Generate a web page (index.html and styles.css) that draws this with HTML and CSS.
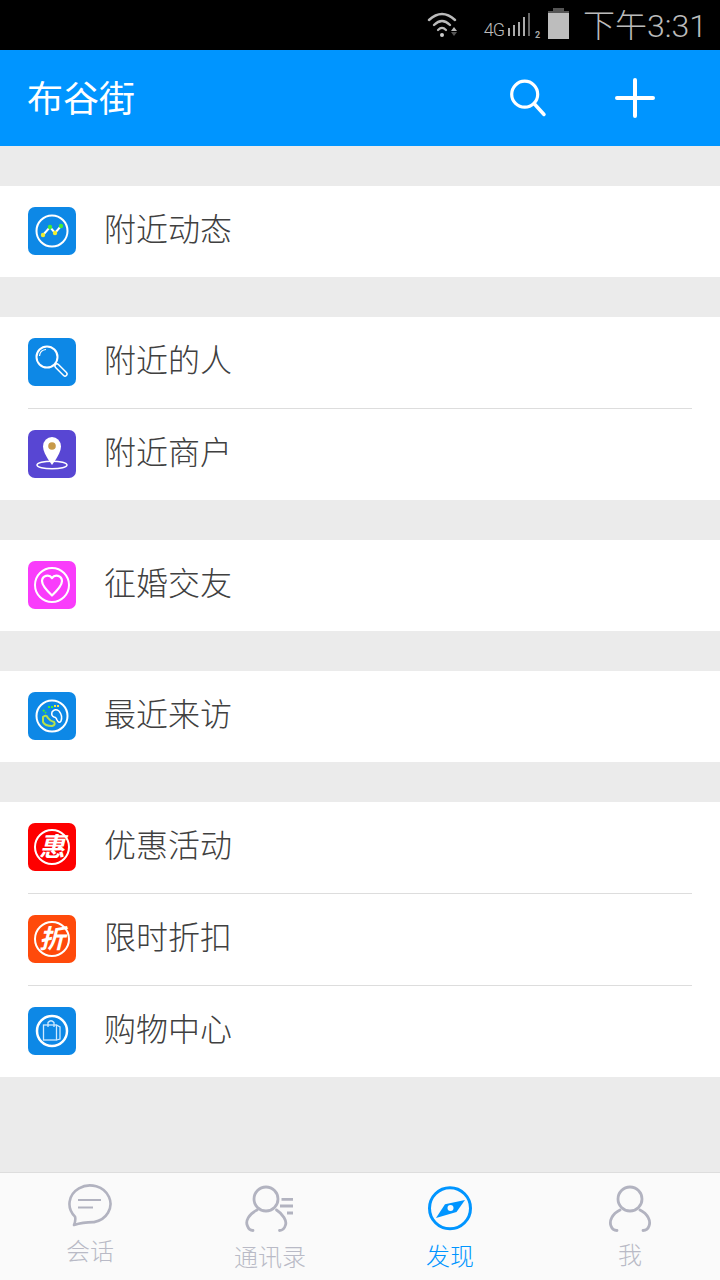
FILE: index.html
```html
<!DOCTYPE html>
<html lang="zh">
  <head>
    <meta charset="UTF-8" />
    <meta name="viewport" content="width=device-width, initial-scale=1" />
    <title>布谷街</title>
    <link rel="stylesheet" href="styles.css">
  </head>

  <body>
    <div class="status-bar">
      <svg class="ico-wifi" width="36" height="30" viewBox="0 0 36 30">
        <path d="M2 10 Q15 -2 28 10" fill="none" stroke="#bbb" stroke-width="2.400" stroke-linecap="round" />
        <path d="M7 15 Q15 7 23 15" fill="none" stroke="#bbb" stroke-width="2.400" stroke-linecap="round" />
        <path d="M11 20 Q15 16 19 20" fill="none" stroke="#bbb" stroke-width="2.200" stroke-linecap="round" />
        <circle cx="15" cy="25" r="2" fill="#ccc" />
        <path d="M24 21 l3 -4 l3 4z" fill="#bbb" />
        <path d="M24 22 l3 4 l3 -4z" fill="#555" />
      </svg>
      <span class="net">4G</span>
      <svg class="ico-signal" width="36" height="32" viewBox="0 0 36 32">
        <rect x="1" y="19" width="2" height="8" fill="#aaa" />
        <rect x="6" y="16" width="2" height="11" fill="#aaa" />
        <rect x="11" y="13" width="2" height="14" fill="#aaa" />
        <rect x="16" y="8" width="2" height="19" fill="#aaa" />
        <rect x="21" y="4" width="2" height="23" fill="#666" />
        <text class="sim" x="28" y="29">2</text>
      </svg>
      <svg class="ico-batt" width="22" height="32" viewBox="0 0 22 32">
        <rect x="5" y="0" width="11" height="3" fill="#555" />
        <rect x="0" y="3" width="21" height="2" fill="#555" />
        <rect x="0" y="5" width="21" height="26" fill="#bdbdbd" />
      </svg>
      <span class="clock">下午3:31</span>
    </div>

    <header class="top-bar">
      <h1 class="title">布谷街</h1>
      <div class="actions">
        <svg width="40" height="40" viewBox="0 0 40 40">
          <circle cx="16.700" cy="16.200" r="13" fill="none" stroke="#fff" stroke-width="3.200" />
          <path d="M26.500 26 L36 36.500" stroke="#fff" stroke-width="3.500" stroke-linecap="round" />
        </svg>
        <svg width="42" height="42" viewBox="0 0 42 42">
          <path d="M21 3 V39 M3 21 H39" stroke="#fff" stroke-width="4" stroke-linecap="round" />
        </svg>
      </div>
    </header>

    <main class="content">
      <section class="group">
        <div class="row">
          <span class="app-ico blue">
            <svg viewBox="0 0 48 48" width="48" height="48">
              <circle cx="24" cy="24" r="15.500" fill="none" stroke="#fff" stroke-width="2" />
              <path d="M15 28 L22 20 L27 26 L33 19" fill="none" stroke="#fff" stroke-width="2" />
              <circle cx="15" cy="28" r="2.200" fill="#ee3" />
              <circle cx="22" cy="20" r="2.200" fill="#4e3" />
              <circle cx="27" cy="26" r="2.200" fill="#ee3" />
              <circle cx="33" cy="19" r="2.200" fill="#4e3" />
            </svg>
          </span>
          <span class="label">附近动态</span>
        </div>
      </section>

      <section class="group">
        <div class="row">
          <span class="app-ico blue">
            <svg viewBox="0 0 48 48" width="48" height="48">
              <circle cx="19" cy="19" r="10.500" fill="none" stroke="#fff" stroke-width="2" />
              <path d="M11.500 18 Q12 12 18 11.500" fill="none" stroke="#fff" stroke-width="1.200" />
              <path d="M29 28 L37 36" stroke="#fff" stroke-width="5.500" stroke-linecap="round" />
              <path d="M29 28 L37 36" stroke="#0d88e6" stroke-width="2.600" stroke-linecap="round" />
            </svg>
          </span>
          <span class="label">附近的人</span>
        </div>
        <div class="row">
          <span class="app-ico purple">
            <svg viewBox="0 0 48 48" width="48" height="48">
              <ellipse cx="24" cy="35" rx="15" ry="3.800" fill="none" stroke="#fff" stroke-width="1.500" />
              <path d="M24 35 Q15 23 15 16.500 A9 9.500 0 0 1 33 16.500 Q33 23 24 35z" fill="#fff" />
              <circle cx="24" cy="16" r="3.800" fill="#c79a4a" />
            </svg>
          </span>
          <span class="label">附近商户</span>
        </div>
      </section>

      <section class="group">
        <div class="row">
          <span class="app-ico pink">
            <svg viewBox="0 0 48 48" width="48" height="48">
              <circle cx="24" cy="24" r="17" fill="none" stroke="#fff" stroke-width="2" />
              <path d="M24 34.500 Q14 25 14 20 A5.500 5.500 0 0 1 24 17 A5.500 5.500 0 0 1 34 20 Q34 25 24 34.500z" fill="none" stroke="#fff" stroke-width="2.200" stroke-linejoin="round" />
            </svg>
          </span>
          <span class="label">征婚交友</span>
        </div>
      </section>

      <section class="group">
        <div class="row">
          <span class="app-ico blue">
            <svg viewBox="0 0 48 48" width="48" height="48">
              <circle cx="24" cy="24" r="15.500" fill="none" stroke="#fff" stroke-width="2" />
              <path d="M24 20 Q27 16 31 19 Q35 24 33 29 Q31 32 29 28 Q28 25 26 25 Q23 24 24 20z" fill="none" stroke="#fff" stroke-width="1.500" />
              <path d="M15 25 Q18 22 20 26 Q22 29 26 30 Q28 33 24 34 Q17 34 15 30z" fill="none" stroke="#b8e04a" stroke-width="2" />
              <path d="M20 15 H25" stroke="#4e3" stroke-width="2" stroke-dasharray="2 1" />
              <path d="M26 14 H32" stroke="#fde047" stroke-width="2" stroke-dasharray="2 1" />
              <path d="M15 18 L18 21" stroke="#4e3" stroke-width="2" stroke-dasharray="2 1" />
            </svg>
          </span>
          <span class="label">最近来访</span>
        </div>
      </section>

      <section class="group">
        <div class="row">
          <span class="app-ico red">
            <svg viewBox="0 0 48 48" width="48" height="48">
              <circle cx="24" cy="24" r="17" fill="none" stroke="#fff" stroke-width="2" />
            </svg>
            <span class="ico-char">惠</span>
          </span>
          <span class="label">优惠活动</span>
        </div>
        <div class="row">
          <span class="app-ico orange">
            <svg viewBox="0 0 48 48" width="48" height="48">
              <circle cx="24" cy="24" r="17" fill="none" stroke="#fff" stroke-width="2" />
            </svg>
            <span class="ico-char">折</span>
          </span>
          <span class="label">限时折扣</span>
        </div>
        <div class="row">
          <span class="app-ico blue">
            <svg viewBox="0 0 48 48" width="48" height="48">
              <circle cx="24" cy="24" r="15" fill="none" stroke="#fff" stroke-width="2.500" />
              <rect x="15.500" y="18" width="13" height="15" fill="none" stroke="#cfeaff" stroke-width="1.300" />
              <path d="M28.500 18 L32 20 V32 L28.500 33" fill="none" stroke="#cfeaff" stroke-width="1.300" />
              <path d="M20 20 V15.500 Q23 12 26 15.500 V20" fill="none" stroke="#cfeaff" stroke-width="1.300" />
            </svg>
          </span>
          <span class="label">购物中心</span>
        </div>
      </section>
    </main>

    <nav class="tabs">
      <div class="tab tab-chat">
        <svg width="44" height="44" viewBox="0 0 44 44">
          <path d="M6 41 Q8 36 7 32.600 A20.500 18.500 0 1 1 26 38.100 Q15 38 6 41z" fill="none" stroke="#b2b3c0" stroke-width="2.600" stroke-linejoin="round" />
          <path d="M10 16 H33 M10 23.500 H25" stroke="#b2b3c0" stroke-width="2.200" />
        </svg>
        <span>会话</span>
      </div>
      <div class="tab">
        <svg width="50" height="48" viewBox="0 0 50 48">
          <circle cx="21" cy="14" r="12" fill="none" stroke="#b2b3c0" stroke-width="2.800" />
          <path d="M12 25 C4 29 0 36 2.500 41 Q4 45.500 8 45.500 M31.500 25 C38 29 42 36 40.500 40 Q39 45.500 34.500 45.500" fill="none" stroke="#b2b3c0" stroke-width="2.800" stroke-linecap="round" />
          <path d="M36.500 14.300 H48 M35 21 H48 M42 28 H48" stroke="#b2b3c0" stroke-width="2.800" />
        </svg>
        <span>通讯录</span>
      </div>
      <div class="tab active">
        <svg width="46" height="46" viewBox="0 0 46 46">
          <circle cx="23" cy="23.300" r="20.500" fill="none" stroke="#0095ff" stroke-width="3" />
          <path d="M9 33 L18 19.300 L38 15 L29.500 27z" fill="#0095ff" />
          <circle cx="23.500" cy="23" r="3" fill="#fafafa" />
        </svg>
        <span>发现</span>
      </div>
      <div class="tab tab-me">
        <svg width="44" height="48" viewBox="0 0 44 48">
          <circle cx="22" cy="14" r="12" fill="none" stroke="#b2b3c0" stroke-width="2.800" />
          <path d="M12 25 C4 29 1 36 3 41 Q4.500 45.500 9 45.500 M32 25 C40 29 43 36 41 41 Q39.500 45.500 35 45.500" fill="none" stroke="#b2b3c0" stroke-width="2.800" stroke-linecap="round" />
        </svg>
        <span>我</span>
      </div>
    </nav>
  </body>
</html>
```

FILE: styles.css
```css
html,
body {
  height: 100%;
}
body {
  display: flex;
  flex-direction: column;
  overflow: hidden;
  height: 1280px;
  margin: 0;
  font-family: "Noto Sans CJK SC", "Noto Sans", sans-serif;
  background-color: #ebebeb;
}

.status-bar {
  display: flex;
  align-items: center;
  justify-content: flex-end;
  flex: 0 0 50px;
  padding-right: 13px;
  color: #bbb;
  background-color: #000;
}
.status-bar .ico-wifi {
  margin-right: 21px;
}
.status-bar .net {
  margin-top: 9px;
  font: 300 18px "Roboto", sans-serif;
  letter-spacing: -1px;
}
.status-bar .ico-signal {
  margin: 0 5px 0 3px;
}
.status-bar .sim {
  font: 700 9px "Roboto", sans-serif;
  fill: #aaa;
}
.status-bar .ico-batt {
  margin: -2px 13px 0 0;
}
.status-bar .clock {
  margin-bottom: 4px;
  font: 300 32px "Roboto", "Noto Sans CJK SC", sans-serif;
}

.top-bar {
  display: flex;
  align-items: center;
  justify-content: space-between;
  flex: 0 0 96px;
  padding: 0 64px 0 28px;
  background-color: #0095ff;
}
.top-bar .title {
  margin: 0 0 4px -1px;
  font-size: 36px;
  font-weight: 400;
  color: #fff;
}
.top-bar .actions {
  display: flex;
  align-items: center;
  gap: 66px;
}

.content {
  flex: 1;
  padding-top: 40px;
}
.group {
  margin-bottom: 40px;
  padding-left: 28px;
  background-color: #fff;
}
.row {
  display: flex;
  align-items: center;
  gap: 28px;
  box-sizing: border-box;
  height: 92px;
  margin-right: 28px;
  padding-bottom: 1px;
  border-bottom: 1px solid #ddd;
}
.row:last-child {
  height: 91px;
  border-bottom: 0;
}
.label {
  margin-bottom: 8px;
  font-size: 32px;
  font-weight: 300;
  color: #404040;
}

.app-ico {
  display: block;
  position: relative;
  flex: 0 0 48px;
  width: 48px;
  height: 48px;
  border-radius: 7px;
}
.app-ico svg {
  display: block;
}
.app-ico.blue {
  background-color: #0d88e6;
}
.app-ico.purple {
  background-color: #5846d3;
}
.app-ico.pink {
  background-color: #f93cfb;
}
.app-ico.red {
  background-color: #fe0000;
}
.app-ico.orange {
  background-color: #ff4a0b;
}
.ico-char {
  position: absolute;
  top: -2px;
  left: 0;
  width: 100%;
  font-size: 26px;
  font-weight: 700;
  font-style: italic;
  line-height: 48px;
  text-align: center;
  color: #fff;
}

.tabs {
  display: grid;
  grid-template-columns: repeat(4, 180px);
  flex: 0 0 107px;
  border-top: 1px solid #ddd;
  background-color: #fafafa;
}
.tab {
  display: flex;
  flex-direction: column;
  align-items: center;
  padding-top: 12px;
  font-size: 24px;
  font-weight: 300;
  line-height: 34px;
  color: #b9bac6;
}
.tab svg {
  display: block;
  margin-bottom: 6px;
}
.tab.active {
  color: #0095ff;
}
.tab.active svg {
  margin-bottom: 7px;
}
.tab-chat {
  padding-top: 11px;
}
.tab-chat svg {
  margin-bottom: 5px;
}
.tab-me svg {
  margin-bottom: 4px;
}
```
